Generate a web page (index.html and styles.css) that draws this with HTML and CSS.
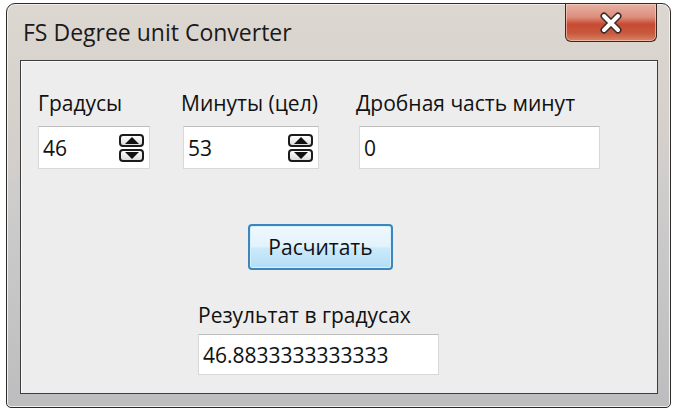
FILE: index.html
```html
<!DOCTYPE html>
<html lang="ru">
<head>
<meta charset="utf-8">
<title>FS Degree unit Converter</title>
<link rel="stylesheet" href="styles.css">
</head>
<body>
<div class="window">
  <div class="titlebar">
    <div class="title">FS Degree unit Converter</div>
    <div class="close">
      <svg width="30" height="22" viewBox="0 0 30 22">
        <path d="M8 4 L22 18 M22 4 L8 18" stroke="#3b2a26" stroke-width="7" stroke-linecap="round"/>
        <path d="M8 4 L22 18 M22 4 L8 18" stroke="#ffffff" stroke-width="4" stroke-linecap="round"/>
      </svg>
    </div>
  </div>
  <div class="client">
    <div class="row">
      <div class="field f1">
        <div class="label">Градусы</div>
        <div class="input">
          <span class="val">46</span>
          <div class="spin">
            <div class="sb"><span class="tri up"></span></div>
            <div class="sb"><span class="tri down"></span></div>
          </div>
        </div>
      </div>
      <div class="field f2">
        <div class="label">Минуты (цел)</div>
        <div class="input">
          <span class="val">53</span>
          <div class="spin">
            <div class="sb"><span class="tri up"></span></div>
            <div class="sb"><span class="tri down"></span></div>
          </div>
        </div>
      </div>
      <div class="field f3">
        <div class="label">Дробная часть минут</div>
        <div class="input"><span class="val">0</span></div>
      </div>
    </div>
    <div class="btnrow">
      <div class="button">Расчитать</div>
    </div>
    <div class="result">
      <div class="label">Результат в градусах</div>
      <div class="input r"><span class="val">46.8833333333333</span></div>
    </div>
  </div>
</div>
</body>
</html>
```

FILE: styles.css
```css
html, body {
  margin: 0;
  padding: 0;
  background: #ffffff;
  width: 676px;
  height: 410px;
  overflow: hidden;
  font-family: "Open Sans", "Noto Sans", sans-serif;
  color: #111;
}
.window {
  box-sizing: border-box;
  margin: 3px 0 0 6px;
  width: 665px;
  height: 405px;
  border: 1px solid #2e2a28;
  border-radius: 9px 9px 5px 5px;
  background: linear-gradient(to bottom, #ddd7d1 0%, #d6d0cb 30%, #cfcdcc 45%, #c6c6c7 70%, #bdbdbf 100%);
  padding: 0 12px 13px 13px;
  box-shadow: inset 0 0 0 1px #f2efec;
  display: flex;
  flex-direction: column;
}
.titlebar {
  height: 56px;
  display: flex;
  justify-content: space-between;
  align-items: flex-start;
}
.title {
  font-size: 23px;
  line-height: 30px;
  margin-top: 13px;
  margin-left: 3px;
  color: #1a1a1a;
}
.close {
  width: 92px;
  height: 38px;
  margin-right: 1px;
  box-sizing: border-box;
  border: 1px solid #3a2622;
  border-top: none;
  border-radius: 0 0 6px 6px;
  background: linear-gradient(to bottom, #e6b1a4 0%, #dc8f7c 35%, #c84a33 55%, #c85a3e 80%, #d7866a 100%);
  box-shadow: inset 0 0 0 1px rgba(255,220,210,0.55);
  display: flex;
  align-items: center;
  justify-content: center;
}
.client {
  flex: 1;
  box-sizing: border-box;
  border: 1px solid #3d3d3d;
  background: #ededed;
  box-shadow: inset 1px 1px 0 #fafafa;
  padding: 28px 0 0 17px;
}
.row {
  display: flex;
  gap: 33px;
}
.f3 { margin-left: 7px; }
.label {
  font-size: 21px;
  line-height: 28px;
  white-space: nowrap;
}
.f2 .label { margin-left: -2px; }
.f3 .label { margin-left: -3px; }
.input {
  box-sizing: border-box;
  height: 43px;
  margin-top: 9px;
  background: #ffffff;
  border: 1px solid #d8d8d8;
  border-top-color: #bdbdbd;
  display: flex;
  align-items: center;
  justify-content: space-between;
  padding: 0 6px 0 4px;
}
.f1 .input { width: 112px; }
.f2 .input { width: 136px; }
.f3 .input { width: 241px; }
.val {
  font-size: 21px;
}
.spin {
  display: flex;
  flex-direction: column;
  gap: 2px;
  margin-right: -1px;
}
.sb {
  box-sizing: border-box;
  width: 25px;
  height: 13px;
  border: 2px solid #1b1b1b;
  border-radius: 4px;
  background: linear-gradient(to bottom, #ffffff, #dcdcdc);
  display: flex;
  align-items: center;
  justify-content: center;
}
.tri {
  width: 0;
  height: 0;
  border-left: 7px solid transparent;
  border-right: 7px solid transparent;
}
.tri.up { border-bottom: 7px solid #111; }
.tri.down { border-top: 7px solid #111; }
.btnrow {
  margin-top: 55px;
  padding-left: 210px;
}
.button {
  box-sizing: border-box;
  width: 145px;
  height: 46px;
  border: 2px solid #3c86bd;
  border-radius: 4px;
  background: linear-gradient(to bottom, #f0f8fd 0%, #e2f2fb 50%, #cbeafb 52%, #b3def5 100%);
  box-shadow: inset 0 0 0 1px #d6f0fc;
  font-size: 21px;
  display: flex;
  align-items: center;
  justify-content: center;
  color: #111;
}
.result {
  margin-top: 31px;
  padding-left: 160px;
}
.input.r {
  width: 241px;
  height: 41px;
  margin-top: 5px;
}
```
